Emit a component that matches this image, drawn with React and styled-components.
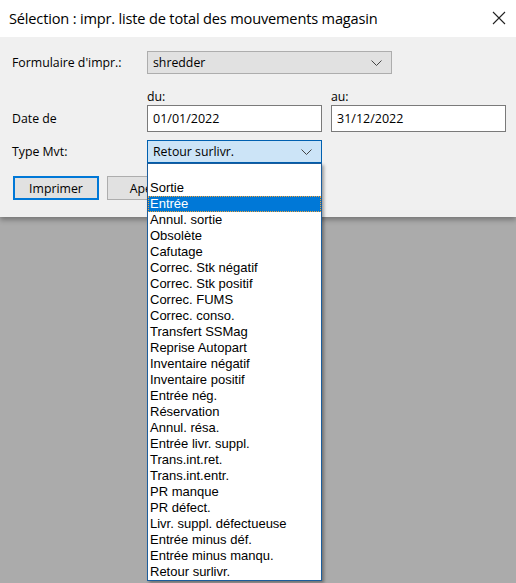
import React from "react";
import styled, { createGlobalStyle } from "styled-components";

const GlobalStyle = createGlobalStyle`
  html, body {
    margin: 0;
    padding: 0;
    background: #ababab;
  }
  body {
    font-family: "Open Sans", "Noto Sans", sans-serif;
    color: #000;
  }
`;

const Page = styled.div`
  position: relative;
  width: 516px;
  height: 583px;
  background: #ababab;
`;

const Dialog = styled.div`
  position: relative;
  z-index: 1;
  width: 516px;
  background: #f0f0f0;
  box-shadow: 0 3px 5px rgba(0, 0, 0, 0.3);
`;

const TitleBar = styled.div`
  height: 37px;
  background: #fff;
  display: flex;
  align-items: center;
  justify-content: space-between;
  padding: 0 9px 0 9px;
  box-sizing: border-box;
`;

const Title = styled.div`
  font-size: 14.6px;
  letter-spacing: -0.18px;
  color: #000;
  margin-top: -1px;
`;

const CloseButton = styled.div`
  width: 14px;
  height: 14px;
  display: flex;
  margin-right: 1px;
  margin-top: -1px;
`;

const Form = styled.div`
  display: flex;
  flex-direction: column;
  padding: 14px 11px 17px 12px;
`;

const Row = styled.div`
  display: grid;
  grid-template-columns: 126px 175px 175px;
  column-gap: 9px;
  align-items: center;
  margin-top: ${(p) => p.$mt || 0}px;
  height: ${(p) => p.$h}px;
`;

const Label = styled.div`
  font-size: 12.3px;
  line-height: 16px;
  color: #000;
`;

const SmallLabel = styled(Label)`
  align-self: end;
`;

const SelectBox = styled.div`
  position: relative;
  grid-column: ${(p) => (p.$wide ? "2 / span 2" : "2")};
  width: ${(p) => (p.$wide ? "245px" : "auto")};
  height: 23px;
  box-sizing: border-box;
  border: 1px solid ${(p) => (p.$focus ? "#0060b0" : "#adadad")};
  background: ${(p) => (p.$focus ? "#cce4f7" : "#e1e1e1")};
  display: flex;
  align-items: center;
  justify-content: space-between;
  padding: 0 9px 0 5px;
  font-size: 12.3px;
`;

const Input = styled.div`
  height: 27px;
  box-sizing: border-box;
  border: 1px solid #7a7a7a;
  background: #fff;
  display: flex;
  align-items: center;
  padding: 0 5px 1px 5px;
  font-size: 12.5px;
`;

const Button = styled.div`
  height: 24px;
  box-sizing: border-box;
  border: ${(p) => (p.$default ? "2px solid #0078d7" : "1px solid #adadad")};
  background: #e1e1e1;
  display: flex;
  align-items: center;
  justify-content: center;
  font-size: 12.3px;
  width: 86px;
`;

const ButtonRow = styled.div`
  display: flex;
  gap: 8px;
  margin-top: 13px;
  padding-left: 1px;
`;

const DropList = styled.ul`
  position: absolute;
  top: 22px;
  left: -1px;
  width: 175px;
  margin: 0;
  padding: 0;
  list-style: none;
  box-sizing: border-box;
  border: 1px solid #1c5d9c;
  background: #fff;
  box-shadow: 2px 2px 3px rgba(0, 0, 0, 0.35);
  z-index: 10;
`;

const Item = styled.li`
  height: 16px;
  line-height: 16px;
  padding: 0 2px;
  font-family: "Liberation Sans", Arial, sans-serif;
  font-size: 13px;
  color: ${(p) => (p.$active ? "#fff" : "#000")};
  background: ${(p) => (p.$active ? "#0078d7" : "transparent")};
  outline: ${(p) => (p.$active ? "1px dotted #f2a33a" : "none")};
  outline-offset: -1px;
  white-space: nowrap;
`;

const Chevron = () => (
  <svg width="11" height="6" viewBox="0 0 11 6">
    <path d="M0.5 0.5 L5.5 5.5 L10.5 0.5" fill="none" stroke="#444" strokeWidth="1" />
  </svg>
);

const items = [
  "",
  "Sortie",
  "Entrée",
  "Annul. sortie",
  "Obsolète",
  "Cafutage",
  "Correc. Stk négatif",
  "Correc. Stk positif",
  "Correc. FUMS",
  "Correc. conso.",
  "Transfert SSMag",
  "Reprise Autopart",
  "Inventaire négatif",
  "Inventaire positif",
  "Entrée nég.",
  "Réservation",
  "Annul. résa.",
  "Entrée livr. suppl.",
  "Trans.int.ret.",
  "Trans.int.entr.",
  "PR manque",
  "PR défect.",
  "Livr. suppl. défectueuse",
  "Entrée minus déf.",
  "Entrée minus manqu.",
  "Retour surlivr.",
];

export default function App() {
  return (
    <>
      <GlobalStyle />
      <Page>
        <Dialog>
          <TitleBar>
            <Title>Sélection : impr. liste de total des mouvements magasin</Title>
            <CloseButton>
              <svg width="14" height="14" viewBox="0 0 14 14">
                <path d="M1 1 L13 13 M13 1 L1 13" stroke="#222" strokeWidth="1.1" fill="none" />
              </svg>
            </CloseButton>
          </TitleBar>
          <Form>
            <Row $h={23}>
              <Label>Formulaire d'impr.:</Label>
              <SelectBox $wide>
                <span>shredder</span>
                <Chevron />
              </SelectBox>
            </Row>
            <Row $h={24} $mt={7}>
              <span />
              <SmallLabel>du:</SmallLabel>
              <SmallLabel>au:</SmallLabel>
            </Row>
            <Row $h={27}>
              <Label>Date de</Label>
              <Input>01/01/2022</Input>
              <Input>31/12/2022</Input>
            </Row>
            <Row $h={23} $mt={8}>
              <Label>Type Mvt:</Label>
              <SelectBox $focus>
                <span>Retour surlivr.</span>
                <Chevron />
                <DropList>
                  {items.map((it, i) => (
                    <Item key={i} $active={it === "Entrée"}>
                      {it || "\u00a0"}
                    </Item>
                  ))}
                </DropList>
              </SelectBox>
            </Row>
            <ButtonRow>
              <Button $default>Imprimer</Button>
              <Button>Aperçu</Button>
            </ButtonRow>
          </Form>
        </Dialog>
      </Page>
    </>
  );
}
